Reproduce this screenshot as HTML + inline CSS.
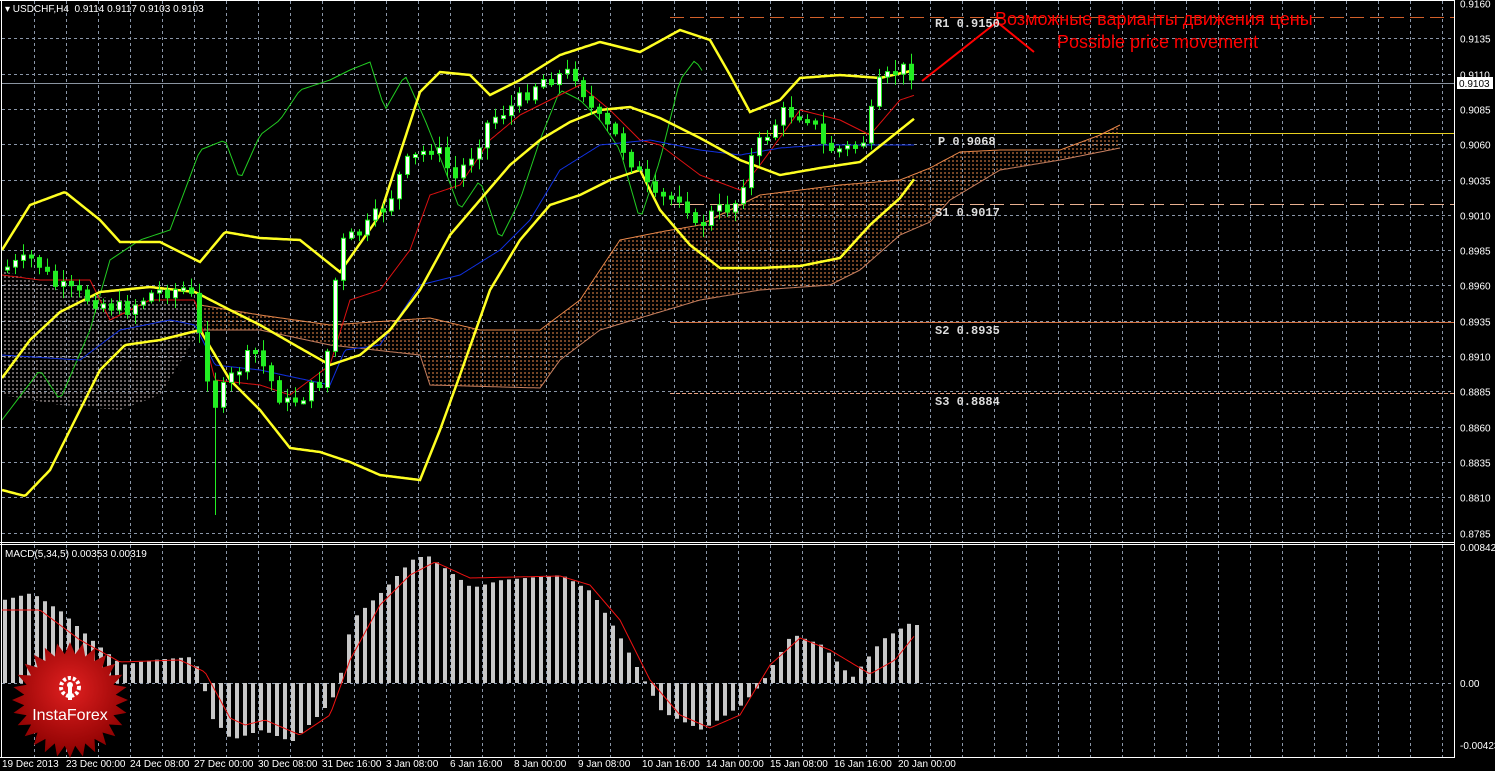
<!DOCTYPE html>
<html><head><meta charset="utf-8"><style>
html,body{margin:0;padding:0;background:#000;width:1495px;height:771px;overflow:hidden}
svg{display:block}
text{font-family:"Liberation Sans",sans-serif}
text.m{font-family:"Liberation Mono",monospace;font-weight:bold;font-size:12px}
</style></head><body>
<svg id="s" width="1495" height="771" xmlns="http://www.w3.org/2000/svg">
<defs>
<pattern id="ho" width="4" height="4" patternUnits="userSpaceOnUse"><line x1="1" y1="0" x2="1" y2="4" stroke="#e8874a" stroke-width="1" stroke-dasharray="2,2"/></pattern>
<pattern id="hw" width="4" height="4" patternUnits="userSpaceOnUse"><line x1="1" y1="0" x2="1" y2="4" stroke="#d8c8c8" stroke-width="1" stroke-dasharray="2,2"/></pattern>
<radialGradient id="rg" cx="50%" cy="40%" r="60%"><stop offset="0" stop-color="#e02020"/><stop offset="1" stop-color="#8a0000"/></radialGradient>
</defs>
<rect width="1495" height="771" fill="#000"/>
<g id="grid"></g>
<g id="chart"></g>
<line x1="1454.5" y1="0" x2="1454.5" y2="757" stroke="#fff"/>
<line x1="0" y1="542.5" x2="1454" y2="542.5" stroke="#fff"/>
<line x1="0" y1="544.5" x2="1454" y2="544.5" stroke="#fff"/>
<line x1="1.5" y1="0" x2="1.5" y2="757" stroke="#fff"/>
<line x1="0" y1="757.5" x2="1455" y2="757.5" stroke="#fff"/>
<line x1="0" y1="0.5" x2="1455" y2="0.5" stroke="#fff"/>
<g id="axis" fill="#fff" font-size="10"></g>
<text x="5" y="12" fill="#fff" font-size="10">▾ USDCHF,H4&#160; 0.9114 0.9117 0.9103 0.9103</text>
<text x="5" y="557" fill="#fff" font-size="10">MACD(5,34,5) 0.00353 0.00319</text>
<text x="995" y="25" fill="#ff0000" font-size="18">Возможные варианты движения цены</text>
<text x="1057" y="48" fill="#ff0000" font-size="18">Possible price movement</text>
<polyline points="922,81 997,22 1034,52" fill="none" stroke="#ff0000" stroke-width="2"/>
<g fill="#ddd">
<text class="m" x="935" y="27">R1 0.9150</text>
<text class="m" x="938" y="145">P 0.9068</text>
<text class="m" x="935" y="216">S1 0.9017</text>
<text class="m" x="935" y="334">S2 0.8935</text>
<text class="m" x="935" y="405">S3 0.8884</text>
</g>
<g transform="translate(70,700)">
<polygon id="star" fill="url(#rg)"/>
<g fill="#fff"><circle cx="0" cy="-13" r="9" fill="none" stroke="#fff" stroke-width="4" stroke-dasharray="3,2"/><rect x="-2" y="-14" width="4" height="14"/><circle cx="0" cy="-15" r="3"/></g>
<text x="0" y="20" fill="#fff" font-size="16" text-anchor="middle">InstaForex</text>
</g>
</svg>
<script>
var NS="http://www.w3.org/2000/svg";
function el(p,t,a){var e=document.createElementNS(NS,t);for(var k in a)e.setAttribute(k,a[k]);p.appendChild(e);return e;}
function interp(pts,x){if(x<=pts[0][0])return pts[0][1];for(var i=1;i<pts.length;i++){if(x<=pts[i][0]){var a=pts[i-1],b=pts[i];return a[1]+(b[1]-a[1])*(x-a[0])/(b[0]-a[0]);}}return pts[pts.length-1][1];}
function line(g,pts,col,w,step){var s="";for(var x=pts[0][0];x<=pts[pts.length-1][0];x+=step||2)s+=x+","+interp(pts,x).toFixed(1)+" ";el(g,"polyline",{points:s,fill:"none",stroke:col,"stroke-width":w});}
var grid=document.getElementById("grid"),ch=document.getElementById("chart"),ax=document.getElementById("axis");
var GC="#8a96a8";
for(var x=34;x<1454;x+=32){el(grid,"line",{x1:x+.5,y1:1,x2:x+.5,y2:542,stroke:GC,"stroke-width":1,"stroke-dasharray":"3,3"});el(grid,"line",{x1:x+.5,y1:545,x2:x+.5,y2:757,stroke:GC,"stroke-width":1,"stroke-dasharray":"3,3"});}
var labs=["0.9160","0.9135","0.9110","0.9085","0.9060","0.9035","0.9010","0.8985","0.8960","0.8935","0.8910","0.8885","0.8860","0.8835","0.8810","0.8785"];
for(var i=0;i<labs.length;i++){var y=Math.round(3+i*35.3)+.5;if(i>0)el(grid,"line",{x1:2,y1:y,x2:1454,y2:y,stroke:GC,"stroke-width":1,"stroke-dasharray":"3,3"});el(ax,"text",{x:1460,y:y+4}).textContent=labs[i];}
el(grid,"line",{x1:2,y1:683.5,x2:1454,y2:683.5,stroke:GC,"stroke-dasharray":"3,3"});
[["0.00842",551],["0.00",687],["-0.00423",749]].forEach(function(a){el(ax,"text",{x:1460,y:a[1]}).textContent=a[0];});
var dl=["19 Dec 2013","23 Dec 00:00","24 Dec 08:00","27 Dec 00:00","30 Dec 08:00","31 Dec 16:00","3 Jan 08:00","6 Jan 16:00","8 Jan 00:00","9 Jan 08:00","10 Jan 16:00","14 Jan 00:00","15 Jan 08:00","16 Jan 16:00","20 Jan 00:00"];
for(var i=0;i<dl.length;i++){el(ax,"text",{x:i==0?2:2+i*64,y:767}).textContent=dl[i];}
el(ax,"rect",{x:1457,y:77,width:36,height:12,fill:"#fff"});
el(ax,"text",{x:1459,y:87,fill:"#000"}).textContent="0.9103";
el(ch,"line",{x1:2,y1:83.5,x2:1454,y2:83.5,stroke:"#8a94a0"});
el(ch,"line",{x1:670,y1:17.5,x2:1454,y2:17.5,stroke:"#d2602a","stroke-dasharray":"14,6"});
el(ch,"line",{x1:670,y1:133.5,x2:1454,y2:133.5,stroke:"#e8d020"});
el(ch,"line",{x1:670,y1:204.5,x2:1454,y2:204.5,stroke:"#e8b090","stroke-dasharray":"14,6"});
el(ch,"line",{x1:670,y1:322.5,x2:1454,y2:322.5,stroke:"#d27040"});
el(ch,"line",{x1:670,y1:393.5,x2:1454,y2:393.5,stroke:"#e8a080","stroke-dasharray":"4,2"});
var cu=[[200,305],[260,315],[330,325],[430,318],[480,330],[540,330],[580,300],[620,240],[660,232],[700,225],[760,195],[840,185],[900,180],[930,168],[960,152],[1000,150],[1060,150],[1100,135],[1120,125]];
var cl=[[200,330],[260,330],[330,345],[420,355],[430,385],[540,388],[560,360],[600,330],[700,300],[760,290],[830,285],[860,270],[900,235],[930,222],[950,200],[1000,170],[1060,160],[1120,148]];
function poly(u,l,f){var s="";u.forEach(function(p){s+=p[0]+","+p[1]+" ";});l.slice().reverse().forEach(function(p){s+=p[0]+","+p[1]+" ";});el(ch,"polygon",{points:s,fill:f});}
poly(cu,cl,"url(#ho)");
poly([[2,270],[60,290],[120,300],[200,305]],[[2,395],[60,405],[120,410],[160,395],[200,330]],"url(#hw)");
line(ch,cu,"#e8874a",1);line(ch,cl,"#c88060",1);
line(ch,[[2,420],[40,370],[60,400],[90,330],[110,260],[140,240],[170,230],[200,150],[225,140],[240,180],[260,135],[280,120],[300,90],[330,80],[350,70],[370,62],[385,110],[405,75],[425,120],[445,170],[460,210],[480,180],[500,240],[520,200],[540,140],[560,90],[580,100],[600,120],[620,150],[640,220],[660,160],[680,80],[695,60],[705,75]],"#22cc22",1,4);
line(ch,[[2,275],[40,280],[90,280],[110,320],[150,300],[195,300],[215,380],[260,385],[290,395],[330,365],[350,300],[380,290],[410,250],[430,195],[460,185],[490,140],[520,115],[550,100],[580,85],[610,110],[640,140],[660,145],[700,175],[740,190],[760,165],[800,110],[840,120],[870,135],[900,100],[915,95]],"#dd1111",1);
line(ch,[[2,355],[80,360],[120,330],[170,320],[195,325],[215,365],[260,370],[330,385],[345,350],[380,345],[420,285],[460,275],[500,250],[530,220],[560,170],[600,145],[650,140],[700,150],[740,155],[780,148],[820,145],[870,145],[915,145]],"#1030e0",1);
var up=[[2,250],[30,205],[65,192],[100,220],[120,242],[160,242],[200,262],[225,232],[260,238],[300,240],[340,272],[380,215],[420,92],[440,72],[470,75],[490,95],[520,80],[560,55],[600,42],[640,52],[680,30],[710,40],[730,75],[750,112],[780,100],[800,78],[840,75],[880,78],[915,70]];
var md=[[2,378],[30,340],[60,312],[100,292],[150,287],[195,292],[230,310],[260,325],[300,348],[330,365],[360,355],[390,330],[420,290],[450,235],[480,200],[510,165],[540,140],[570,122],[600,110],[630,107],[660,118],[700,138],[740,160],[780,175],[820,168],[860,162],[890,138],[915,118]];
var lo=[[2,490],[25,496],[50,470],[70,430],[100,370],[125,345],[160,340],[200,330],[230,380],[260,410],[290,448],[320,452],[350,462],[380,475],[420,480],[440,430],[460,375],[490,290],[520,240],[550,205],[580,195],[610,180],[640,170],[660,210],[690,245],[720,268],[760,268],[800,266],[840,258],[870,225],[900,198],[915,178]];
line(ch,up,"#ffff22",2.5);line(ch,md,"#ffff22",2.5);line(ch,lo,"#ffff22",2.5);
var cp=[[5,270],[40,258],[60,285],[90,297],[130,310],[160,292],[195,288],[210,360],[220,405],[235,380],[260,350],[290,405],[310,395],[330,378],[345,245],[370,230],[395,200],[410,165],[440,145],[460,180],[480,150],[495,120],[520,105],[545,80],[580,72],[600,115],[620,135],[640,165],[660,200],[690,195],[700,230],[720,212],[740,205],[760,150],[790,112],[815,115],[830,148],[850,150],[870,140],[885,85],[905,68],[915,72]];
var seed=7;function rnd(){seed=(seed*9301+49297)%233280;return seed/233280;}
var prev=interp(cp,5);
for(var x=5;x<=915;x+=8){var c=interp(cp,x+8)+(rnd()-0.5)*16;var o=prev;var hi=Math.min(o,c)-rnd()*10-2,lw=Math.max(o,c)+rnd()*10+2;if(x==213)lw=515;
el(ch,"line",{x1:x+2.5,y1:hi,x2:x+2.5,y2:lw,stroke:"#22ee22"});
var t=Math.min(o,c),h=Math.max(3,Math.abs(o-c));
el(ch,"rect",{x:x+0.5,y:t,width:4,height:h,fill:c<o?"#ffffff":"#22ee22",stroke:"#22ee22","stroke-width":1});prev=c;}
var mh=[[2,600],[30,593],[60,612],[90,640],[120,665],[150,660],[190,657],[198,672],[210,718],[230,740],[260,730],[290,742],[320,712],[335,692],[350,620],[380,592],[410,560],[425,555],[440,566],[470,588],[500,580],[560,575],[590,592],[620,640],[640,676],[660,712],[700,730],[740,705],[760,683],[790,634],[820,645],[850,678],[880,640],[910,622],[915,625]];
for(var x=3;x<=915;x+=8){var y=interp(mh,x);el(ch,"rect",{x:x,y:Math.min(y,683),width:4,height:Math.abs(683-y),fill:"#c8c8c8"});}
line(ch,[[2,610],[40,610],[80,640],[120,662],[180,660],[205,672],[230,718],[245,725],[265,720],[300,735],[330,715],[350,660],[380,605],[410,575],[435,562],[470,578],[560,576],[590,585],[620,620],[650,680],[680,715],[710,728],[740,715],[770,665],[800,638],[830,650],[870,674],[895,660],[915,635]],"#ee1111",1,3);
var s="";for(var i=0;i<56;i++){var a=i*Math.PI/28,r=i%2?46:58;s+=(Math.sin(a)*r).toFixed(1)+","+(-Math.cos(a)*r).toFixed(1)+" ";}document.getElementById("star").setAttribute("points",s);
</script>
</body></html>
